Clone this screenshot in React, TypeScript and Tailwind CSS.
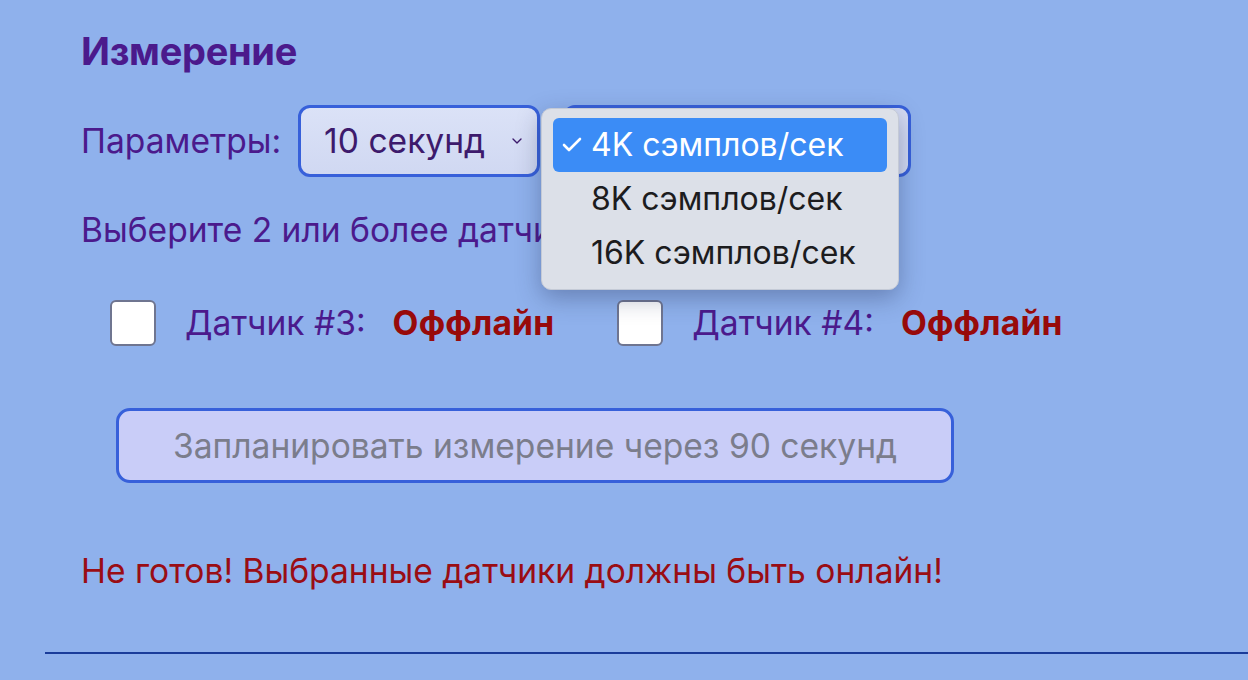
import { Check, ChevronDown } from "lucide-react"

// Sensor checkbox with label + status
function SensorRow({ num }: { num: number }) {
  return (
    <label className="flex items-center">
      <span className="w-[46px] h-[46px] rounded-[6px] bg-white border-2 border-[#6f7590] shrink-0" />
      <span className="ml-[29px] text-[#4b1a8c]">Датчик #{num}:</span>
      <span className="ml-[27px] font-bold text-[#980a0a] tracking-[0.2px]">Оффлайн</span>
    </label>
  )
}

export default function App() {
  return (
    <div
      className="relative w-full h-[680px] overflow-hidden bg-[#8fb1ec] text-[33.6px] leading-[40px]"
      style={{ fontFamily: "Inter, 'Noto Sans', sans-serif" }}
    >
      <div className="pl-[81px] pt-[30px]">
        <h2 className="text-[38px] leading-[42px] font-bold text-[#4b1a8c] tracking-[-0.3px]">Измерение</h2>

        {/* Parameters row */}
        <div className="mt-[33px] flex items-center">
          <span className="text-[#4b1a8c]">Параметры:</span>
          <div className="ml-[17px] w-[242px] h-[72px] rounded-[12px] border-[3px] border-[#3760da] bg-gradient-to-b from-[#dbe2f7] to-[#d0d8f2] flex items-center pl-[23px] pr-[12px]">
            <span className="text-[#3d1a6c]">10 секунд</span>
            <ChevronDown className="ml-auto w-[16px] h-[16px] text-[#3d1a6c]" strokeWidth={2} />
          </div>
          <div className="ml-[23px] w-[348px] h-[72px] rounded-[12px] border-[3px] border-[#3760da] bg-[#d4dbf3]" />
        </div>

        <p className="mt-[33px] text-[#4b1a8c]">Выберите 2 или более датчиков:</p>

        {/* Sensors */}
        <div className="mt-[50px] ml-[29px] flex items-center gap-[63px]">
          <SensorRow num={3} />
          <SensorRow num={4} />
        </div>

        <button
          disabled
          className="block mt-[62px] ml-[35px] w-[838px] h-[75px] rounded-[14px] border-[3px] border-[#3760da] bg-[#c9cdf8] text-[#7b7d8c]"
        >
          Запланировать измерение через 90 секунд
        </button>

        <p className="mt-[68px] text-[#9a0d14]">Не готов! Выбранные датчики должны быть онлайн!</p>
      </div>

      <div className="ml-[45px] mt-[61px] h-[2px] bg-[#1a3c9a]" />

      {/* Open native-style dropdown menu */}
      <div className="absolute left-[541px] top-[108px] w-[358px] h-[182px] rounded-[10px] bg-[#dce0e8] border border-[#c4cad6] shadow-[0_8px_24px_rgba(30,40,80,0.35)] px-[11px] py-[9px] text-[32px] text-[#1c1c1e]">
        <div className="h-[54px] rounded-[6px] bg-[#3b8cf6] text-white flex items-center">
          <Check className="ml-[7px] w-[24px] h-[24px]" strokeWidth={2.6} />
          <span className="ml-[7px]">4K сэмплов/сек</span>
        </div>
        <div className="h-[54px] flex items-center pl-[38px]">8K сэмплов/сек</div>
        <div className="h-[54px] flex items-center pl-[38px]">16K сэмплов/сек</div>
      </div>
    </div>
  )
}
